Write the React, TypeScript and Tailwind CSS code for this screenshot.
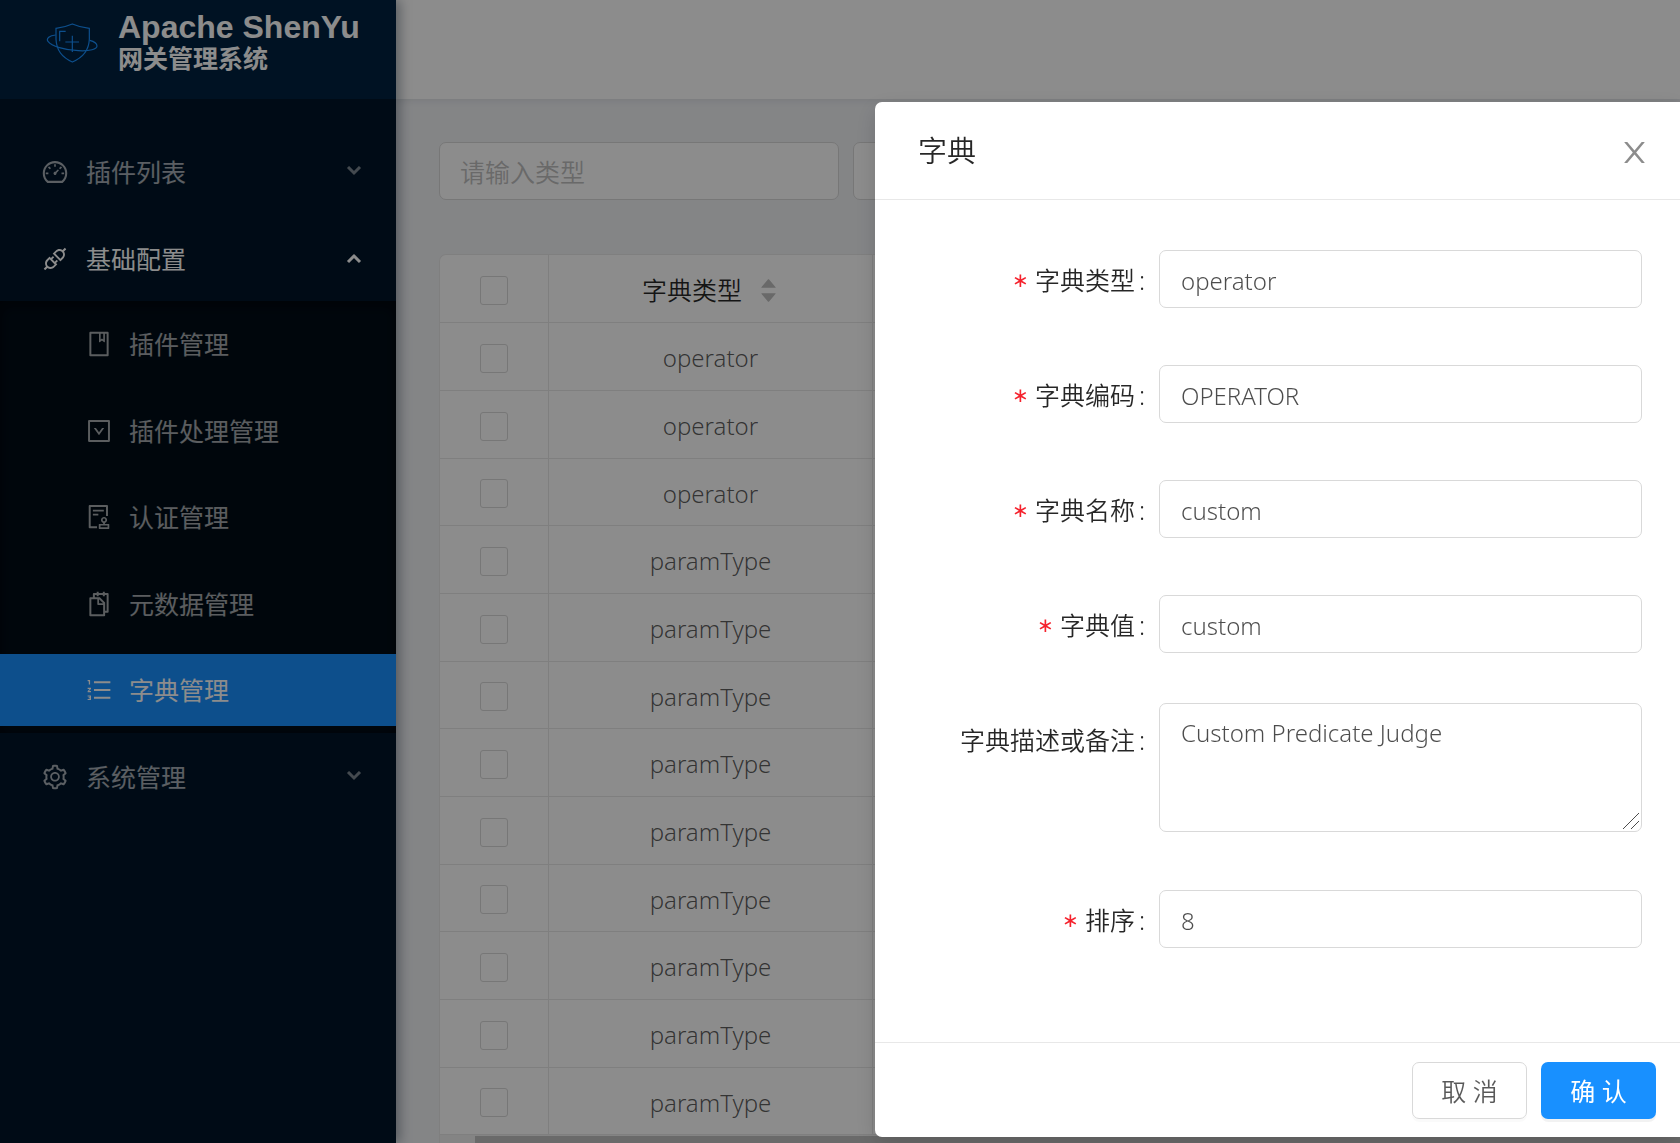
import type { ReactNode } from "react";
import {
  AiFillCaretDown,
  AiFillCaretUp,
  AiOutlineApi,
  AiOutlineAudit,
  AiOutlineBook,
  AiOutlineDashboard,
  AiOutlineDownSquare,
  AiOutlineOrderedList,
  AiOutlineSetting,
  AiOutlineSnippets,
} from "react-icons/ai";

const subMenu: { label: string; icon: ReactNode; active?: boolean }[] = [
  { label: "插件管理", icon: <AiOutlineBook /> },
  { label: "插件处理管理", icon: <AiOutlineDownSquare /> },
  { label: "认证管理", icon: <AiOutlineAudit /> },
  { label: "元数据管理", icon: <AiOutlineSnippets /> },
  { label: "字典管理", icon: <AiOutlineOrderedList />, active: true },
];

const rows: string[] = [
  "operator",
  "operator",
  "operator",
  "paramType",
  "paramType",
  "paramType",
  "paramType",
  "paramType",
  "paramType",
  "paramType",
  "paramType",
  "paramType",
];

const fields: { id: string; label: string; value: string; required?: boolean; multiline?: boolean }[] = [
  { id: "type", label: "字典类型", value: "operator", required: true },
  { id: "dictCode", label: "字典编码", value: "OPERATOR", required: true },
  { id: "dictName", label: "字典名称", value: "custom", required: true },
  { id: "dictValue", label: "字典值", value: "custom", required: true },
  { id: "desc", label: "字典描述或备注", value: "Custom Predicate Judge", multiline: true },
  { id: "sort", label: "排序", value: "8", required: true },
];

function Logo() {
  return (
    <svg
      viewBox="18 39 156 120"
      className="h-10 w-[52px] shrink-0 text-[#1890ff]"
      fill="none"
      stroke="currentColor"
      strokeWidth="3.6"
    >
      <path d="M97 42 Q72 53 48 55 V88 Q50 136 97 156 Q146 136 148 88 V55 Q122 53 97 42Z" />
      <path d="M47 75 C28 76 18 86 24 94 C34 108 75 121 115 122 C150 124 171 117 171 108 C171 101 161 94 149 91" />
      <path d="M59 94 V64 H77" />
      <path d="M97 77 V126 M76 96 H117" />
    </svg>
  );
}

function CloseIcon() {
  return (
    <svg viewBox="64 64 896 896" width="29" height="29" fill="currentColor">
      <path d="M563.8 512l262.5-312.9c4.4-5.2.7-13.1-6.1-13.1h-79.8c-4.7 0-9.2 2.1-12.3 5.7L511.6 449.8 295.1 191.7c-3-3.6-7.5-5.7-12.3-5.7H203c-6.8 0-10.5 7.9-6.1 13.1L459.4 512 196.9 824.9A7.95 7.95 0 0 0 203 838h79.8c4.7 0 9.2-2.1 12.3-5.7l216.5-258.1 216.5 258.1c3 3.6 7.5 5.7 12.3 5.7h79.8c6.8 0 10.5-7.9 6.1-13.1L563.8 512z" />
    </svg>
  );
}

function Arrow({ up }: { up?: boolean }) {
  return (
    <svg
      width="16"
      height="12"
      viewBox="0 0 16 12"
      fill="none"
      stroke="currentColor"
      strokeWidth="3"
      className={up ? "ml-auto" : "ml-auto opacity-75"}
    >
      <path d={up ? "M2 9 L8 3 L14 9" : "M2 1 L8 7 L14 1"} />
    </svg>
  );
}

function MenuTitle({ icon, label, open }: { icon: ReactNode; label: string; open?: boolean }) {
  return (
    <button
      type="button"
      aria-expanded={!!open}
      className={`flex h-[72px] w-full items-center pl-[41px] pr-[34px] ${open ? "text-white" : "text-white/65"}`}
    >
      <span className="mr-[17px] text-[28px]">{icon}</span>
      {label}
      <Arrow up={open} />
    </button>
  );
}

function Sidebar() {
  return (
    <aside className="relative z-10 w-[396px] shrink-0 bg-[#001529] font-normal shadow-[4px_0_11px_rgba(0,21,41,0.35)]">
      <div className="flex h-[99px] items-start bg-[#002140] pl-[46px] pt-[11px]">
        <div className="flex items-center gap-5">
          <Logo />
          <h1 className="font-bold text-white">
            <span className="block whitespace-nowrap text-[32px] leading-8">Apache ShenYu</span>
            <span className="block text-[25px] leading-8">网关管理系统</span>
          </h1>
        </div>
      </div>
      <nav className="pt-[37px]">
        <MenuTitle icon={<AiOutlineDashboard />} label="插件列表" />
        <div className="mt-[15px]">
          <MenuTitle icon={<AiOutlineApi />} label="基础配置" open />
          <ul className="mt-[6px] flex h-[432px] flex-col justify-between bg-[#000c17] py-[7px] shadow-[inset_0_4px_14px_rgba(0,0,0,0.45)]">
            {subMenu.map((item) => (
              <li key={item.label}>
                <a
                  href="#"
                  className={`flex h-[72px] items-center pl-[85px] ${
                    item.active ? "bg-[#1890ff] text-white" : "text-white/65"
                  }`}
                >
                  <span className="mr-4 text-[28px]">{item.icon}</span>
                  {item.label}
                </a>
              </li>
            ))}
          </ul>
        </div>
        <div className="mt-2">
          <MenuTitle icon={<AiOutlineSetting />} label="系统管理" />
        </div>
      </nav>
    </aside>
  );
}

function Checkbox({ label }: { label: string }) {
  return (
    <input
      type="checkbox"
      aria-label={label}
      className="mx-auto block h-[29px] w-7 appearance-none rounded-[3px] border border-[#d9d9d9] bg-white"
    />
  );
}

function DictTable() {
  return (
    <div className="overflow-hidden rounded-tl-[7px] border-l border-t border-[#e8e8e8] bg-white">
      <table className="w-full table-fixed border-separate border-spacing-0 text-center [&_td]:pt-[3px] [&_th]:pt-[3px]">
        <colgroup>
          <col className="w-[109px]" />
          <col className="w-[324px]" />
          <col />
        </colgroup>
        <thead>
          <tr className="h-[68px] text-black/85">
            <th className="border-b border-r border-[#e8e8e8]">
              <Checkbox label="全选" />
            </th>
            <th className="border-b border-r border-[#e8e8e8] [font-weight:350]">
              <span className="flex items-center justify-center gap-4">
                字典类型
                <span className="flex flex-col items-center text-[21px] text-[#bfbfbf]">
                  <AiFillCaretUp className="-mb-[7px]" />
                  <AiFillCaretDown />
                </span>
              </span>
            </th>
            <th className="border-b border-[#e8e8e8]" />
          </tr>
        </thead>
        <tbody>
          {rows.map((type, i) => (
            <tr key={i} className="h-[68px] text-2xl font-light text-black/65 nth-[3n]:h-[67px]">
              <td className="border-b border-r border-[#e8e8e8]">
                <Checkbox label={`${type} ${i + 1}`} />
              </td>
              <td className="border-b border-r border-[#e8e8e8]">{type}</td>
              <td className="border-b border-[#e8e8e8]" />
            </tr>
          ))}
        </tbody>
      </table>
      <div className="h-5 bg-[#f1f1f1] pl-[35px] pt-px">
        <div className="h-4 bg-[#c1c1c1]" />
      </div>
    </div>
  );
}

function DictModal() {
  return (
    <div className="fixed inset-0 z-20 flex items-start justify-end bg-black/45 pt-[102px]">
      <div
        role="dialog"
        aria-labelledby="dialog-title"
        className="w-[805px] rounded-l-[7px] bg-white shadow-[0_7px_22px_rgba(0,0,0,0.15)]"
      >
        <div className="flex h-[98px] items-center justify-between border-b border-[#e8e8e8] pl-[43px] pr-[31px]">
          <h2 id="dialog-title" className="pt-px text-[29px] text-black/85">
            字典
          </h2>
          <button type="button" aria-label="关闭" className="pt-1 text-black/45">
            <CloseIcon />
          </button>
        </div>

        <form id="dict-form" className="flex flex-col gap-[43px] pb-[87px] pl-[43px] pr-[38px] pt-[43px]">
          {fields.map((field) => (
            <div key={field.id} className={field.multiline ? "flex h-[137px] items-start" : "flex h-[72px] items-center"}>
              <label
                htmlFor={field.id}
                className="flex h-[72px] w-[241px] shrink-0 items-center justify-end pr-[14px] pt-0.5 text-black/85"
              >
                {field.required && (
                  <span className="mr-[6px] text-[20px] font-light text-[#f5222d]">∗</span>
                )}
                {field.label}
                <span className="ml-1">:</span>
              </label>
              {field.multiline ? (
                <div className="relative flex h-[129px] min-w-0 flex-1">
                  <textarea
                    id={field.id}
                    defaultValue={field.value}
                    className="w-full resize-none rounded-[7px] border border-[#d9d9d9] px-[21px] py-[10px] text-2xl font-light leading-[38px] text-black/70"
                  />
                  <svg
                    width="16"
                    height="16"
                    viewBox="0 0 16 16"
                    stroke="#4d4d4d"
                    className="pointer-events-none absolute bottom-[3px] right-[3px]"
                  >
                    <path d="M0 16 L16 0 M8 16 L16 8" />
                  </svg>
                </div>
              ) : (
                <input
                  id={field.id}
                  defaultValue={field.value}
                  className="h-[58px] min-w-0 flex-1 rounded-[7px] border border-[#d9d9d9] px-[21px] pt-0.5 text-2xl font-light text-black/70"
                />
              )}
            </div>
          ))}
        </form>

        <div className="flex justify-end gap-[14px] border-t border-[#e8e8e8] pb-[18px] pr-6 pt-[19px]">
          <button
            type="button"
            className="h-[57px] w-[115px] rounded-[7px] border border-[#d9d9d9] pt-px text-black/65 shadow-[0_3px_0_rgba(0,0,0,0.02)]"
          >
            取 消
          </button>
          <button
            type="submit"
            form="dict-form"
            className="h-[57px] w-[115px] rounded-[7px] bg-[#1890ff] pt-px font-normal text-white shadow-[0_3px_0_rgba(0,0,0,0.05)]"
          >
            确 认
          </button>
        </div>
      </div>
    </div>
  );
}

export default function App() {
  return (
    <div className="flex h-screen overflow-hidden bg-[#f0f2f5] text-[25px] leading-[38px] [font-family:'Noto_Sans','Noto_Sans_CJK_SC',sans-serif] [font-weight:350] [&_h1]:[font-family:'Liberation_Sans','Noto_Sans_CJK_SC',sans-serif]">
      <Sidebar />
      <main className="min-w-0 flex-1">
        <header className="h-[99px] bg-white shadow-[0_2px_7px_rgba(0,21,41,0.08)]" />
        <div className="pl-[43px] pt-[43px]">
          <div className="mb-[54px] flex gap-[14px]">
            <input
              aria-label="类型"
              placeholder="请输入类型"
              className="h-[58px] w-[400px] rounded-[7px] border border-[#d9d9d9] bg-white px-5 pt-0.5 placeholder:text-[#bfbfbf]"
            />
            <input
              aria-label="名称"
              className="h-[58px] w-[400px] rounded-[7px] border border-[#d9d9d9] bg-white px-5"
            />
          </div>
          <DictTable />
        </div>
      </main>
      <DictModal />
    </div>
  );
}
